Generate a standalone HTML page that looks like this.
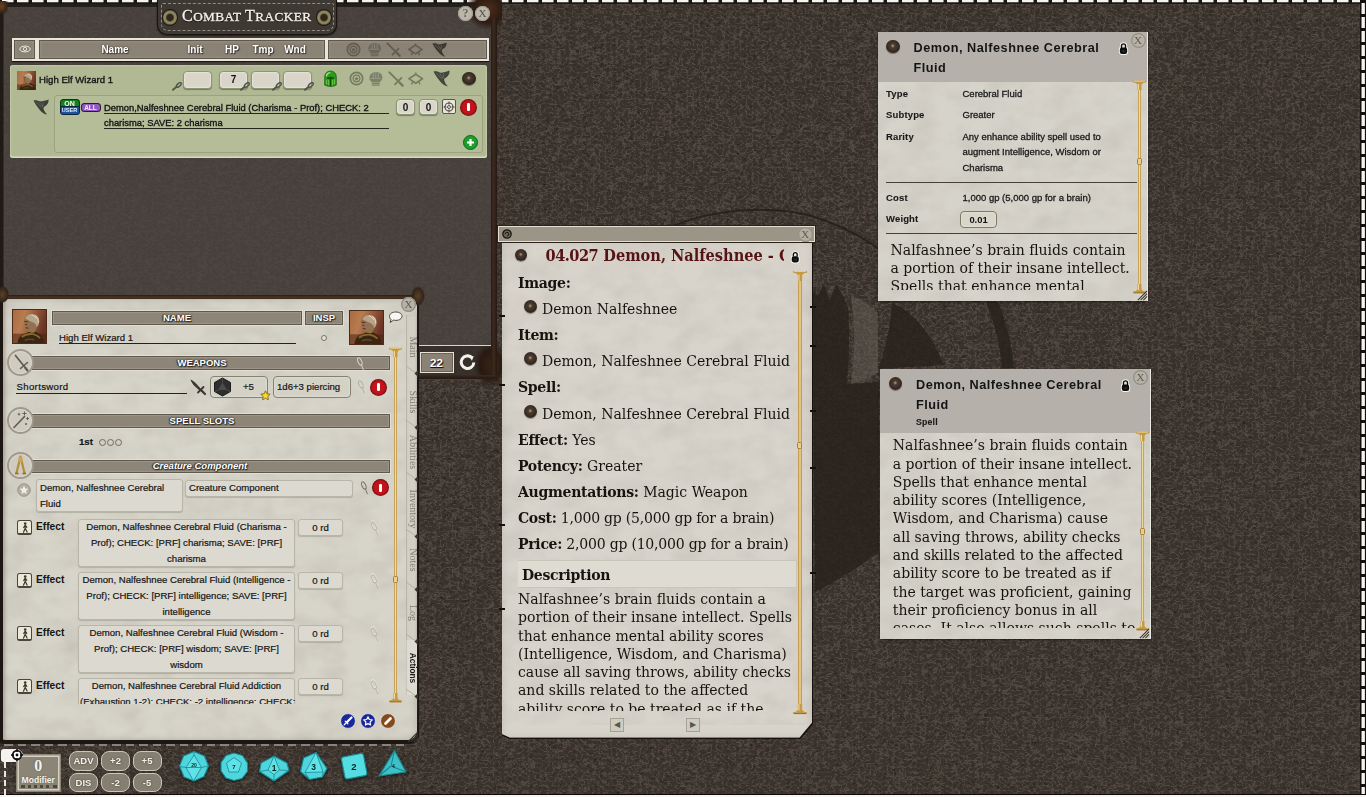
<!DOCTYPE html>
<html lang="en">
<head>
<meta charset="utf-8">
<title>Fantasy Grounds - Combat Tracker</title>
<style>
*{box-sizing:border-box;margin:0;padding:0}
html,body{width:1366px;height:797px;overflow:hidden;background:#3f3732}
body{position:relative;font-family:"Liberation Sans","DejaVu Sans",sans-serif;font-size:9.5px;color:#111;}
.abs,.abs *{position:absolute}
.a{position:absolute}
.abs b,.abs span,.abs i{position:static}
.serif{font-family:"DejaVu Serif Condensed","DejaVu Serif","Liberation Serif",serif}
.lserif{font-family:"Liberation Serif","DejaVu Serif",serif}
.nw{white-space:nowrap}
svg{position:absolute;overflow:visible}
/* ---------- desktop ---------- */
#desk{left:0;top:0;width:1366px;height:797px;background:#3f3732}
/* ---------- combat tracker ---------- */
#ct{left:0;top:2px;width:498px;height:378px;background:#4b4643;border-left:3px solid #221a15;border-top:3px solid #2a211b;}
.hdrcell{background:#8a8275;border:1px solid #5f574c;box-shadow:inset 0 0 3px #a39c8e}
.hl{color:#fff;font-weight:bold;font-size:10px;text-shadow:0 0 2px #3a342c,1px 1px 1px #3a342c;transform:translateX(-50%);white-space:nowrap}
.nbox{background:#d9d6c9;border:1px solid #8f9475;border-radius:4px;box-shadow:inset 0 0 2px #fff, 0 1px 1px rgba(60,60,40,.5);text-align:center;font-weight:bold;font-size:10px;line-height:16px}

/* ---------- character sheet ---------- */
.bar{background:#8c8578;border:1px solid #5f584c;box-shadow:0 0 0 1px #e2ded3,inset 0 0 0 1px #9a9386}
.bl{color:#fff;font-weight:bold;font-size:9.5px;line-height:12px;text-shadow:0 0 2px #2c2822,1px 1px 1px #2c2822,-1px 0 1px #2c2822;transform:translateX(-50%);white-space:nowrap}
.tx{font-size:9.6px;line-height:12px;color:#151515;-webkit-text-stroke:.2px #151515}
.circ{width:27px;height:27px;margin:-1px 0 0 -1px;border-radius:50%;background:#cfcbc0;border:2px solid #9e998b;box-shadow:inset 0 0 2px #f0ede4}
.fbox{background:#d4d1c6;border:1.500px solid #858171;border-radius:4px;box-shadow:inset 0 0 2px #f4f2ea}
.ebox{background:#dcd9d0;border:1px solid #b9b5a9;border-radius:3px;box-shadow:0 1px 1px rgba(120,115,100,.35)}
.rd{width:45px;height:17px;text-align:center;font-size:9.6px;line-height:15px;color:#151515;-webkit-text-stroke:.2px #151515}
.redb{width:15px;height:15px;border-radius:50%;background:#c2151b;box-shadow:0 0 0 1px #7a0e12,inset 0 0 2px #8d1014;font-size:0}
.redb::after{content:"";position:absolute;left:6px;top:3.5px;width:3px;height:8px;border-radius:1.2px;background:#fff}
.slot{width:7px;height:7px;border-radius:50%;border:1px solid #6d6a62}
.eico{width:15px;height:15.500px;background:#ece8d8;border:1px solid #4a463c;border-right-width:1.500px;border-bottom-width:2px;border-radius:2.500px}
.ef{font-weight:bold;font-size:10.200px;line-height:12px;color:#151515}
.et{width:213px;text-align:center;font-size:9.6px;line-height:15.8px;color:#151515;-webkit-text-stroke:.2px #151515;white-space:nowrap}
.rb{width:15px;height:15px;border-radius:50%;box-shadow:0 0 0 1px rgba(0,0,0,.4)}
.tab{left:412.500px;font-family:"Liberation Serif",serif;font-size:10px;line-height:12px;color:#7f7a6e;white-space:nowrap;transform:translate(-50%,-50%) rotate(90deg)}
.xb{width:15px;height:15px;border-radius:50%;background:#b6b2a7;color:#5f5a51;font-size:11px;line-height:15px;text-align:center;box-shadow:inset 0 0 0 1.300px #948f82}

/* ---------- record windows ---------- */
.knob{width:12px;height:12px;border-radius:50%;background:radial-gradient(circle at 48% 45%,#9c8670 0 6%,#4c3c30 20%,#372b22 55%,#1c1511 88%);box-shadow:0 1px 1px rgba(0,0,0,.35)}
.sl{left:0;white-space:nowrap;line-height:24px}
.sl b{letter-spacing:-.3px}
#sbody .knob{width:13px;height:13px}
.sbar{width:3px;background:linear-gradient(90deg,#b58a3a,#f0d79a 50%,#b58a3a)}
.scap{width:11px;height:4px;background:#c79c46;border-radius:2px}
.scapt,.scapb{width:13px;height:10px}
.sthumb{width:5px;height:7px;border:1px solid #a87f33;background:#e9cf8f;border-radius:1.5px}
.nav{width:14px;height:14px;background:#cfccc1;border:1px solid #a5a194;color:#5a564d;font-size:8px;line-height:12px;text-align:center;font-family:"DejaVu Sans",sans-serif}
.wt{font-weight:bold;font-size:12.700px;letter-spacing:.5px;line-height:20px;color:#141414;white-space:nowrap}
.il{font-size:9.500px;line-height:12px;color:#1a1a1a;white-space:nowrap;-webkit-text-stroke:.3px #1a1a1a}
.il.b{-webkit-text-stroke:.1px #1a1a1a;letter-spacing:.15px}
.b{font-weight:bold}
/* ---------- bottom bar ---------- */
.mb{width:29px;height:19.500px;border-radius:8px;background:#857e71;border:1.500px solid #cdc7b9;color:#f3f1ea;font-weight:bold;font-size:9.5px;line-height:17px;text-align:center;text-shadow:0 0 2px #3a342c}
</style>
</head>
<body>
<svg width="0" height="0" style="left:0;top:0">
  <defs>
    <symbol id="i-target" viewBox="0 0 16 16"><circle cx="8" cy="8" r="6.6" fill="none" stroke="currentColor" stroke-width="1.8"/><circle cx="8" cy="8" r="3.6" fill="none" stroke="currentColor" stroke-width="1.3"/><path d="M8 5.6l.8 1.600 1.700.2-1.300 1.200.4 1.700L8 9.500l-1.600.8.400-1.700-1.300-1.200 1.700-.2z" fill="currentColor"/></symbol>
    <symbol id="i-fist" viewBox="0 0 16 16"><path d="M1.500 7.400C1.500 3.400 4 1.200 8 1.200c4.400 0 6.800 1.800 6.800 5.400 0 1.800-.8 3.200-2.200 4.200l-.4 1H3.800l-.4-1.200C2.100 9.800 1.500 8.800 1.500 7.400z" fill="currentColor"/><path d="M3.800 12.300h8.400v1.200H3.800zM4 14h8v1.200H4z" fill="currentColor"/><path d="M5.400 2.400v4.800M8 1.800v5.200M10.800 2.200v5M2.600 7.800h10.400" stroke="#fff" stroke-opacity=".28" stroke-width=".8" fill="none"/></symbol>
    <symbol id="i-sword" viewBox="0 0 16 16"><path d="M1.400 1.400L12.400 12.400" stroke="currentColor" stroke-width="2" stroke-linecap="round"/><path d="M7 13.400L13.400 7" stroke="currentColor" stroke-width="1.800" stroke-linecap="round"/><path d="M12.200 12.200L14.600 14.600" stroke="currentColor" stroke-width="2.400" stroke-linecap="round"/></symbol>
    <symbol id="i-dia" viewBox="0 0 16 16"><path d="M1 8L8 3.400L15 8L8 12.600Z" fill="none" stroke="currentColor" stroke-width="1.700"/><path d="M5 10.800L3.600 14M11 10.800L12.400 14M8 3.400V1.600" stroke="currentColor" stroke-width="1.400" fill="none"/></symbol>
    <symbol id="i-wing" viewBox="0 0 16 16"><path d="M.5 1.500C3 .8 5 1.500 7 2.600c3-.400 6-1.200 8.600-2.200.2 3-1.200 5.400-3.600 6.800-.8.500-1.400 1-1.600 1.800.4 2.400 1.800 4.600 3.800 6.600-3.400-.6-6-2.600-8-5.400C4 7.400 2 4.600.5 1.500z" fill="currentColor"/><path d="M3 3c2 1.400 3.600 3.200 5 5.400M6.400 3.400c1.400 1.400 2.400 3 3.200 4.800M10 3.200c.2 1.400 0 2.800-.4 4" stroke="#fff" stroke-opacity=".25" stroke-width=".7" fill="none"/></symbol>
    <symbol id="i-helm" viewBox="0 0 14 18"><path d="M.8 7.400C.8 3.200 3.200.8 7 .8s6.200 2.400 6.200 6.600v8.400c-1.800 1-3.800 1.400-6.200 1.400s-4.400-.4-6.200-1.400z" fill="#2c9a1b" stroke="#1a5e10" stroke-width=".9"/><path d="M7 6.800V17M3.400 8.200h7.200" stroke="#14490c" stroke-width="1.500" fill="none"/><path d="M2.600 6.400C2.800 4 4.400 2.600 6.800 2.400" stroke="#9cf07a" stroke-width="1.400" fill="none"/><path d="M2.600 10.200v4.600M11.400 9.600v5.200M5 10.400v5.600M9.200 10.400v5.600" stroke="#6ed24c" stroke-width=".9"/></symbol>
    <symbol id="i-pin" viewBox="0 0 12 10"><path d="M1.200 8.800L5 5.400" stroke="currentColor" stroke-width="2.200" stroke-linecap="round"/><ellipse cx="7.800" cy="3.200" rx="3.400" ry="1.600" transform="rotate(-42 7.800 3.200)" fill="none" stroke="currentColor" stroke-width="1.700"/></symbol>
    <symbol id="i-link" viewBox="0 0 10 16"><ellipse cx="4.200" cy="5.200" rx="2.100" ry="4.600" transform="rotate(-24 4.200 5.200)" fill="none" stroke="currentColor" stroke-width="1.100"/><path d="M5.800 8.600L8.200 14.600" stroke="currentColor" stroke-width="1.100" stroke-linecap="round"/></symbol>
    <symbol id="i-scapt" viewBox="0 0 13 10"><path d="M0 .8h13v1.600c-2.500.3-4 1-4.500 2.600v5h-4V5C4 3.400 2.500 2.700 0 2.400z" fill="#c69a43"/><path d="M1 1.200h11" stroke="#f3dc9d" stroke-width=".8"/><path d="M5.500 4v6" stroke="#f0d79a" stroke-width="1"/></symbol><symbol id="i-scapb" viewBox="0 0 13 10"><path d="M0 9.200h13V7.600c-2.500-.3-4-1-4.500-2.600V0h-4v5C4 6.600 2.500 7.300 0 7.600z" fill="#c69a43"/><path d="M1 8.800h11" stroke="#8a6522" stroke-width=".8"/><path d="M5.500 0v6" stroke="#f0d79a" stroke-width="1"/></symbol><symbol id="i-lock" viewBox="0 0 12 16"><g stroke="#f4f3ee" stroke-width="2.200" stroke-linejoin="round"><path d="M3.800 7.500V5.300a2.200 2.200 0 0 1 4.400 0v2.200" fill="none" stroke-width="3.600"/><rect x="2" y="7.200" width="8" height="7" rx="2.400" fill="#f4f3ee"/></g><path d="M3.800 7.500V5.300a2.200 2.200 0 0 1 4.400 0v2.200" fill="#e6e4dd" stroke="#0b0b0b" stroke-width="1.500"/><rect x="2" y="7.200" width="8" height="7" rx="2.400" fill="#0b0b0b"/><path d="M4.500 9.500v3M6 9.500v3M7.500 9.500v3" stroke="#444" stroke-width=".6"/></symbol><linearGradient id="pg" x1="0" y1="0" x2="1" y2=".3"><stop offset="0" stop-color="#a96a40"/><stop offset=".35" stop-color="#b87c50"/><stop offset=".7" stop-color="#935437"/><stop offset="1" stop-color="#693424"/></linearGradient>
    <symbol id="i-port" viewBox="0 0 34 34"><rect width="34" height="34" fill="url(#pg)"/><rect y="24" width="34" height="10" fill="#4a2218" opacity=".55"/><path d="M4.500 34c.5-4.500 2.500-8 6-9.500l5-2 5-1.500c3 .5 5.500 2 8 4.500 2 2.500 3.500 5 4 8.500z" fill="#3a2412"/><path d="M9 27.500c3-2.500 7-3.500 11.500-3 3 .5 5.500 2 7.500 4" stroke="#94722f" stroke-width="2" fill="none" opacity=".85"/><path d="M12 31c3-1.500 7-1.500 10-.500" stroke="#5d5a2a" stroke-width="1.500" fill="none" opacity=".8"/><path d="M11.500 10.500c.5-3.500 3.500-6 7.500-6 4.500 0 7.500 3 7.500 7.500 0 3-1.500 5-2.500 7l-1.500 3.500c-2.500 1-5 .5-6.500-1l-2.500-.500c-1-1-1-2.500-.5-3.500l-1.500-2.500 1-1.500c-.5-1-.5-2-.500-3z" fill="#93704f"/><path d="M12.500 8.500c1.500-3 4-4.500 7-4.500 4.500 0 7.500 3 7.500 7.500 0 2.500-1 4.500-2.500 6-.5-2-1.500-3.500-3-4.500-2.500-1.500-5.500-2.500-9-4.500z" fill="#b5a38a"/><path d="M22.500 5.500c2.500 1.500 4 4 3.500 7.500M19 5c2 .5 4 2 5 4" stroke="#efe6d6" stroke-width="1" fill="none" opacity=".8"/><path d="M11.500 11.500l4 .5M12.500 14.500l2 .5M13 18l3 .5" stroke="#4d3222" stroke-width="1" fill="none"/></symbol>
  </defs>
</svg>
<div id="desk" class="a"></div>
<svg width="1366" height="797" style="left:0;top:0">
  <defs>
    <filter id="leather" color-interpolation-filters="sRGB" x="0" y="0" width="100%" height="100%">
      <feTurbulence type="fractalNoise" baseFrequency="0.17 0.22" numOctaves="2" seed="7" result="n"/>
      <feColorMatrix in="n" type="matrix" values="0 0 0 0 0.36  0 0 0 0 0.322  0 0 0 0 0.29  1 0 0 0 0"/>
      <feComponentTransfer><feFuncA type="table" tableValues="0 0 0 0 0 0 0 0 0 .3 .85 .3 0 0 0 0 0 0 0 0 0"/></feComponentTransfer>
      <feGaussianBlur stdDeviation="0.55"/>
    </filter>
    <filter id="leatherd" color-interpolation-filters="sRGB" x="0" y="0" width="100%" height="100%">
      <feTurbulence type="fractalNoise" baseFrequency="0.3 0.36" numOctaves="2" seed="3" result="n"/>
      <feColorMatrix in="n" type="matrix" values="0 0 0 0 0.10  0 0 0 0 0.08  0 0 0 0 0.07  0 -2.2 -1.6 0 1.75"/>
    </filter>
    <filter id="paper" color-interpolation-filters="sRGB" x="0" y="0" width="100%" height="100%">
      <feTurbulence type="fractalNoise" baseFrequency="0.035 0.05" numOctaves="3" seed="11" result="n"/>
      <feColorMatrix in="n" type="matrix" values="0 0 0 0 0.5  0 0 0 0 0.47  0 0 0 0 0.4  0.9 0.9 0 0 -0.72"/>
    </filter>
    <radialGradient id="vig" cx="50%" cy="50%" r="75%"><stop offset="60%" stop-color="#000" stop-opacity="0"/><stop offset="100%" stop-color="#000" stop-opacity=".25"/></radialGradient>
  </defs>
  <rect width="1366" height="797" fill="#3a322c"/>
  <rect width="1366" height="797" filter="url(#leather)"/>
  <rect width="1366" height="797" filter="url(#leatherd)" opacity=".55"/>
  <!-- dragon emblem -->
  <g id="emblem" fill="#28211d" stroke="none" opacity=".82">
    <path d="M660 232C690 216 735 207 780 210.500C815 213 850 228 885 253" fill="none" stroke="#241d19" stroke-width="1.800"/>
    <path d="M812 290l6 6 5-12 7 16 6-16 6 10 6 14c2 24 1 50-1 76l32-2v170c-20 16-42 28-64 40z"/>
    <path d="M851 296c10 2 20 8 27 18v58c-8 6-18 10-27 12 4-30 4-60 0-88z" fill="#6a625a" opacity=".55"/>
    <path d="M892 303c20 8 38 28 52 62l-66 4c8-20 12-42 14-66z"/>
    <path d="M986 302c8 20 14 42 16 66l12 0c-2-24-8-46-16-66z"/>
  </g>
  <!-- combat tracker body -->
  <rect x="0" y="3" width="497" height="377" fill="#4b4541" opacity=".78"/>
  <rect x="0" y="2" width="497" height="5" fill="#1a1411" opacity=".75"/>
  <rect x="0" y="2" width="3.5" height="378" fill="#1a1411" opacity=".85"/>
  <!-- stitching: top, right, bottom -->
  <rect x="0" y="0" width="1366" height="4" fill="#1d1714"/>
  <line x1="2" y1="1" x2="1366" y2="1" stroke="#f4f3ee" stroke-width="2.4" stroke-dasharray="11.5 3.5"/>
  <rect x="1360" y="0" width="6" height="797" fill="#15110f"/>
  <line x1="1363.2" y1="3" x2="1363.2" y2="797" stroke="#f4f3ee" stroke-width="3.4" stroke-dasharray="11 3"/>
  <rect x="0" y="794" width="1366" height="1" fill="#0e0b0a"/>
  <rect x="0" y="795" width="1366" height="2" fill="#f7f6f2"/>
</svg>

<!-- ================= COMBAT TRACKER ================= -->
<div id="ctc" class="abs" style="left:0;top:0;width:500px;height:385px">
  <!-- title plate -->
  <div style="left:157px;top:0;width:180px;height:34.500px;background:#3f3934;border:1.500px solid #1a1411;border-top:none;border-radius:0 0 10px 10px;box-shadow:0 1px 2px rgba(0,0,0,.6)"></div>
  <div style="left:160.500px;top:3px;width:173px;height:28px;border:1px dashed #a29b90;border-radius:2px 2px 7px 7px;opacity:.85"></div>
  <div class="lserif nw" style="left:182px;top:7px;color:#f3f0e8;font-size:13.200px;letter-spacing:.45px;line-height:18px;text-shadow:0 1px 1px #000;-webkit-text-stroke:.35px #f3f0e8"><span style="font-size:16px">C</span>OMBAT <span style="font-size:16px">T</span>RACKER</div>
  <div style="left:162.500px;top:10px;width:14.500px;height:14.500px;border-radius:50%;background:radial-gradient(circle,#2e281c 0 30%,#544b30 36%,#8d8361 44% 62%,#4d452f 70% 100%);box-shadow:0 0 0 1px #1f1a14"></div>
  <div style="left:316.500px;top:10px;width:14.500px;height:14.500px;border-radius:50%;background:radial-gradient(circle,#2e281c 0 30%,#544b30 36%,#8d8361 44% 62%,#4d452f 70% 100%);box-shadow:0 0 0 1px #1f1a14"></div>
  <div style="left:466px;top:0;width:36px;height:30px;background:radial-gradient(ellipse at 62% 30%,#4a2e1c 0,#2c1b12 45%,rgba(40,25,16,0) 72%)"></div>
  <div style="left:0;top:1px;width:8px;height:13px;background:radial-gradient(ellipse at 20% 40%,#6a4524 0,#3a2415 55%,rgba(40,25,16,0) 85%)"></div>
  <div style="left:474px;top:343px;width:28px;height:44px;background:radial-gradient(ellipse at 60% 50%,#4a2e1c 0,#2c1b12 45%,rgba(40,25,16,0) 72%)"></div>
  <!-- help / close -->
  <div class="lserif" style="left:458px;top:6px;width:15px;height:15px;border-radius:50%;background:#bab6aa;color:#6b665c;font-size:12px;font-weight:bold;line-height:15px;text-align:center;box-shadow:inset 0 0 0 1px #a39e91">?</div>
  <div class="lserif" style="left:475px;top:6px;width:15px;height:15px;border-radius:50%;background:#bab6aa;color:#55504a;font-size:11px;line-height:15px;text-align:center;box-shadow:inset 0 0 0 1px #a39e91">X</div>
  <!-- header bar -->
  <div style="left:12px;top:37.5px;width:477px;height:23.5px;background:#e9e5db;box-shadow:0 1px 1px #1d1713"></div>
  <div class="hdrcell" style="left:14px;top:39.5px;width:21px;height:19.5px"></div>
  <div class="hdrcell" style="left:39px;top:39.5px;width:286px;height:19.5px"></div>
  <div class="hdrcell" style="left:328px;top:39.5px;width:159px;height:19.5px"></div>
  <div class="hl" style="left:115px;top:44px">Name</div>
  <div class="hl" style="left:195px;top:44px">Init</div>
  <div class="hl" style="left:232px;top:44px">HP</div>
  <div class="hl" style="left:263px;top:44px">Tmp</div>
  <div class="hl" style="left:295px;top:44px">Wnd</div>
  <!-- entry -->
  <div style="left:10px;top:64.500px;width:477px;height:93.500px;background:#b1b994;border-radius:3px;box-shadow:inset 0 0 2px #dde3c6,inset 0 -1.500px 1px #d5dbbd"></div>
  <div style="left:54px;top:95px;width:429px;height:57.500px;border:1px solid #9aa280;border-radius:3px;background:#b4bc98"></div>
  <div class="nw" style="left:39px;top:74px;font-size:9.600px;color:#161616;-webkit-text-stroke:.35px #161616">High Elf Wizard 1</div>
  <div class="nbox" style="left:183px;top:71px;width:29px;height:18px"></div>
  <div class="nbox" style="left:219px;top:71px;width:29px;height:18px">7</div>
  <div class="nbox" style="left:251px;top:71px;width:29px;height:18px"></div>
  <div class="nbox" style="left:283px;top:71px;width:29px;height:18px"></div>
  <!-- header icons -->
  <svg style="left:346px;top:42px;color:#625c51" width="15" height="15"><use href="#i-target"/></svg>
  <svg style="left:367px;top:41.500px;color:#6b655a" width="15" height="15"><use href="#i-fist"/></svg>
  <svg style="left:386px;top:42px;color:#625c51" width="15" height="15"><use href="#i-sword"/></svg>
  <svg style="left:407.500px;top:42px;color:#625c51" width="15" height="15"><use href="#i-dia"/></svg>
  <svg style="left:432px;top:41.500px;color:#3d382f" width="15" height="15"><use href="#i-wing"/></svg>
  <svg style="left:19px;top:45px;color:#e8e5dc" width="12" height="8" viewBox="0 0 12 8"><ellipse cx="6" cy="4" rx="5.200" ry="2.900" fill="none" stroke="currentColor" stroke-width="1"/><circle cx="6" cy="4" r="1.700" fill="none" stroke="currentColor" stroke-width=".9"/></svg>
  <!-- entry icons -->
  <svg style="left:323.500px;top:69.500px" width="13" height="17.500"><use href="#i-helm"/></svg>
  <svg style="left:348.500px;top:70.500px;color:#757b61" width="15" height="15"><use href="#i-target"/></svg>
  <svg style="left:368px;top:70.500px;color:#7b8166" width="15.500" height="15.500"><use href="#i-fist"/></svg>
  <svg style="left:388px;top:70.500px;color:#757b61" width="16" height="16"><use href="#i-sword"/></svg>
  <svg style="left:407.500px;top:71px;color:#757b61" width="15.500" height="15.500"><use href="#i-dia"/></svg>
  <svg style="left:432.500px;top:70px;color:#43463b" width="17" height="17"><use href="#i-wing"/></svg>
  <div class="knob" style="left:462px;top:71.500px;width:13.500px;height:13.500px"></div>
  <svg style="left:32.500px;top:98.500px;color:#3d4036" width="16" height="16"><use href="#i-wing"/></svg>
  <svg style="left:172px;top:81.500px;color:#51554a" width="10.500" height="9"><use href="#i-pin"/></svg>
  <svg style="left:239.500px;top:81.500px;color:#51554a" width="10.500" height="9"><use href="#i-pin"/></svg>
  <svg style="left:271.500px;top:81.500px;color:#51554a" width="10.500" height="9"><use href="#i-pin"/></svg>
  <svg style="left:303.500px;top:81.500px;color:#51554a" width="10.500" height="9"><use href="#i-pin"/></svg>
  <svg style="left:16px;top:71px" width="21" height="19"><use href="#i-port"/></svg>
  <svg style="left:443px;top:100.500px;color:#4b4b43;z-index:3" width="12" height="12" viewBox="0 0 12 12"><circle cx="6" cy="6" r="4" fill="none" stroke="currentColor" stroke-width="1.100"/><circle cx="6" cy="6" r="1.500" fill="none" stroke="currentColor" stroke-width=".9"/><path d="M6 .5v3M6 8.500v3M.5 6h3M8.500 6h3" stroke="currentColor" stroke-width="1"/></svg>
  <!-- effect row -->
  <div style="left:60.500px;top:99.500px;width:18px;height:7.500px;line-height:7.500px;background:#16801f;border-radius:2.500px 2.500px 0 0;color:#f2fff2;font-size:7px;font-weight:bold;text-align:center;box-shadow:0 0 0 1px #0b3a10">ON</div>
  <div style="left:60.500px;top:107px;width:18px;height:7px;line-height:7px;background:#1b549c;border-radius:0 0 2.500px 2.500px;color:#e4f0ff;font-size:5.600px;font-weight:bold;text-align:center;box-shadow:0 0 0 1px #0c2442">USER</div>
  <div style="left:81.500px;top:103.500px;width:18px;height:7px;line-height:7px;background:#9159c2;border-radius:2.500px;color:#f6ebff;font-size:6.500px;font-weight:bold;text-align:center;box-shadow:0 0 0 1px #2b1a3c">ALL</div>
  <div class="nw" style="left:104px;top:101.500px;font-size:9.400px;line-height:12px;color:#141414;-webkit-text-stroke:.35px #141414">Demon,Nalfeshnee Cerebral Fluid (Charisma - Prof); CHECK: 2</div>
  <div style="left:104px;top:112.600px;width:285px;height:1px;background:#23261a"></div>
  <div class="nw" style="left:104px;top:116.700px;font-size:9.400px;line-height:12px;color:#141414;-webkit-text-stroke:.35px #141414">charisma; SAVE: 2 charisma</div>
  <div style="left:104px;top:127.700px;width:285px;height:1px;background:#23261a"></div>
  <div class="nbox" style="left:396px;top:99px;width:19px;height:16px;line-height:15px">0</div>
  <div class="nbox" style="left:419px;top:99px;width:19px;height:16px;line-height:15px">0</div>
  <div style="left:442px;top:99px;width:14px;height:15px;background:#e9e6d9;border:1px solid #555;border-radius:2px"></div>
  <div class="redb" style="left:461px;top:99.5px"></div>
  <svg style="left:462.500px;top:134.500px" width="15" height="15" viewBox="0 0 15 15"><circle cx="7.500" cy="7.500" r="7" fill="#1f9d2b" stroke="#0f6418" stroke-width="1"/><path d="M7.500 4v7M4 7.500h7" stroke="#fff" stroke-width="2.200"/></svg>
  <!-- bottom bar of CT -->
  <div style="left:419px;top:346px;width:72px;height:29px;background:rgba(34,24,17,.42)"></div>
  <div style="left:419px;top:345px;width:73px;height:1px;background:#d9d5ca"></div>
  <div style="left:419.500px;top:352px;width:34px;height:20.500px;background:#8a8275;border:1.500px solid #e6e2d8;box-shadow:inset 0 0 0 1px #6b6357"></div>
  <div class="nw" style="left:419px;top:356.500px;width:35px;text-align:center;color:#fff;font-weight:bold;font-size:11.500px;line-height:13px;text-shadow:0 1px 0 #15110d,1px 1px 1px #15110d">22</div>
  <svg style="left:459px;top:354px" width="17" height="17" viewBox="0 0 17 17"><path d="M12.600 3.400A6.300 6.300 0 1 0 14.800 8.500" fill="none" stroke="#f4f2ec" stroke-width="3"/><path d="M9.500 1.200l5.200 1-1.800 4.600z" fill="#f4f2ec"/></svg>
  <!-- frame -->
  <div style="left:491px;top:18px;width:5.500px;height:362px;background:linear-gradient(90deg,#2a1d15,#3b2a20 45%,#26190f)"></div>
  <div style="left:419px;top:374.500px;width:78px;height:4.500px;background:linear-gradient(#3b2a20,#231810)"></div>
</div>

<!-- ================= CHARACTER SHEET ================= -->
<div id="cs" class="abs" style="left:0;top:293px;width:430px;height:456px">
  <!-- frame + paper -->
  <div style="left:0;top:4px;width:419px;height:447px;background:#1d1612;border-radius:2px 2px 9px 3px"></div>
  <div style="left:0;top:1.5px;width:421px;height:5px;background:linear-gradient(#2a1d14,#4a3424 45%,#2c1e15);border-radius:2px"></div>
  <div style="left:2.500px;top:6px;width:414.500px;height:441px;background:#d7d4ca;border-radius:1px 1px 9px 2px;box-shadow:inset 0 0 7px #b9b5a8,inset 3px 0 3px -1px #a9a596"></div>
  <svg style="left:2.500px;top:6px;opacity:.2" width="414.500" height="441"><rect width="414.500" height="441" filter="url(#paper)"/></svg>
  <div style="left:-2px;top:-7px;width:11px;height:17px;background:radial-gradient(ellipse at 40% 50%,#5a4127,#33241a 60%,transparent 72%)"></div>
  <div style="left:411px;top:-7px;width:14px;height:20px;background:radial-gradient(ellipse at 50% 50%,#5a4127,#33241a 55%,transparent 72%)"></div>
  <svg style="left:406px;top:437px" width="13" height="13" viewBox="0 0 13 13"><path d="M2 12L12 2M5 12L12 5M8 12L12 8" stroke="#3a332c" stroke-width="1.100"/></svg>
  <div style="left:4px;top:450.500px;width:404px;height:2px;background:repeating-linear-gradient(90deg,#8f8b86 0 8.500px,transparent 8.500px 13.500px);opacity:.9"></div>
  <!-- tab strip -->
  <div style="left:406px;top:22px;width:11px;height:380px;background:#d2cfc5;border-left:1px solid #b9b5a9;box-shadow:inset -1px 0 2px #b9b5a9"></div>
  <div style="left:406px;top:347px;width:11px;height:55px;background:#dddad1;border-left:1px solid #c9c5ba"></div>
  <!-- portraits -->
  <svg style="left:12.500px;top:16.500px;outline:1px solid #4d2a18" width="33" height="33.500" viewBox="0 0 34 34" preserveAspectRatio="none"><use href="#i-port"/></svg>
  <svg style="left:349.500px;top:17.500px;outline:1px solid #4d2a18" width="33.500" height="33" viewBox="0 0 34 34" preserveAspectRatio="none"><use href="#i-port"/></svg>
  <!-- name / insp bars -->
  <div class="bar" style="left:52px;top:18px;width:250px;height:14px"></div>
  <div class="bar" style="left:305px;top:18px;width:38px;height:14px"></div>
  <div class="bl" style="left:177px;top:19px">NAME</div>
  <div class="bl" style="left:324px;top:19px">INSP</div>
  <div class="tx nw" style="left:59px;top:38.700px">High Elf Wizard 1</div>
  <div style="left:59px;top:49.500px;width:237px;height:1px;background:#222"></div>
  <div style="left:321px;top:42px;width:6px;height:6px;border-radius:50%;border:1px solid #77736a;background:#e4e1d8"></div>
  <!-- weapons -->
  <div class="bar" style="left:30px;top:63px;width:360px;height:14px"></div>
  <div class="circ" style="left:7.5px;top:56.5px"></div>
  <svg style="left:7.5px;top:56.5px;color:#5e5a50" width="25" height="25" viewBox="0 0 25 25"><path d="M7.500 5.500L17.500 18" stroke="currentColor" stroke-width="1.700" stroke-linecap="round"/><path d="M12.500 18.500L19.500 12.500" stroke="currentColor" stroke-width="1.500" stroke-linecap="round"/><path d="M17.500 18l2 2.500" stroke="currentColor" stroke-width="2.200" stroke-linecap="round"/></svg>
  <div class="bl" style="left:202px;top:64px">WEAPONS</div>
  <div class="tx nw" style="left:16.500px;top:87.700px;letter-spacing:.35px">Shortsword</div>
  <div style="left:16px;top:99.500px;width:171px;height:1px;background:#222"></div>
  <div class="fbox" style="left:210px;top:83px;width:58px;height:22px"></div>
  <div class="fbox" style="left:273px;top:83px;width:78px;height:22px"></div>
  <div class="tx nw" style="left:243px;top:88px">+5</div>
  <div class="tx nw" style="left:277px;top:88px">1d6+3 piercing</div>
  <div class="redb" style="left:370.500px;top:86.500px"></div>
  <svg style="left:189px;top:85px;color:#3b3732" width="18" height="17" viewBox="0 0 18 17"><path d="M1.500 1.500C3 2 5 3.500 7.500 6l5 5.500-1.500 1.500-5.500-5C3.200 5.600 2 3.500 1.500 1.500z" fill="currentColor"/><path d="M9 14.500l5.500-5.500" stroke="currentColor" stroke-width="1.800" stroke-linecap="round"/><path d="M12.500 12.500l3.500 3.500" stroke="currentColor" stroke-width="2.200" stroke-linecap="round"/></svg>
  <svg style="left:213px;top:84px" width="19" height="20" viewBox="0 0 19 20"><path d="M9.500 1l8 4.500v9l-8 4.500-8-4.500v-9z" fill="#2f2f2f" stroke="#1c1c1c" stroke-width="1"/><path d="M9.500 5.500l4.500 7.500h-9z" fill="#4c4c4c"/><path d="M9.500 1v4.500M14 13l3.500 1.500M5 13l-3.500 1.500" stroke="#555" stroke-width=".8"/></svg>
  <svg style="left:259.500px;top:96.500px" width="11" height="11" viewBox="0 0 11 11"><path d="M5.500.8l1.400 3 3.300.4-2.400 2.300.6 3.300-2.900-1.600-2.900 1.600.6-3.300L.8 4.200l3.300-.4z" fill="#f5d829" stroke="#6e5a12" stroke-width=".8" stroke-linejoin="round"/></svg>
  <svg style="left:356.500px;top:87px;color:#b4b0a3" width="9" height="14"><use href="#i-link"/></svg>
  <svg style="left:355.500px;top:64px;color:#d9d5c9" width="9" height="14"><use href="#i-link"/></svg>
  <svg style="left:356px;top:167px;color:#d9d5c9" width="9" height="14"><use href="#i-link"/></svg>
  <svg style="left:359.500px;top:187.500px;color:#77736a" width="9" height="14"><use href="#i-link"/></svg>
  <!-- spell slots -->
  <div class="bar" style="left:30px;top:121px;width:360px;height:14px"></div>
  <div class="circ" style="left:7.5px;top:114.5px"></div>
  <svg style="left:7.5px;top:114.5px;color:#5e5a50" width="25" height="25" viewBox="0 0 25 25"><path d="M6 19.500L16.500 8.500" stroke="currentColor" stroke-width="1.600" stroke-linecap="round"/><path d="M16.500 3.500v4M14.500 5.500h4M19.500 9v3M18 10.500h3M11 5v2.500M9.800 6.200h2.400M18 15v2M17 16h2" stroke="currentColor" stroke-width=".9"/></svg>
  <div class="bl" style="left:202px;top:122px">SPELL SLOTS</div>
  <div class="tx nw" style="left:79px;top:143px;font-weight:bold">1st</div>
  <div class="slot" style="left:99px;top:146px"></div>
  <div class="slot" style="left:107px;top:146px"></div>
  <div class="slot" style="left:115px;top:146px"></div>
  <!-- creature component -->
  <div class="bar" style="left:30px;top:167px;width:360px;height:13px"></div>
  <div class="circ" style="left:7.5px;top:160px"></div>
  <svg style="left:7.5px;top:160px;color:#b48d38" width="25" height="25" viewBox="0 0 25 25"><path d="M12.500 3.500L8.500 20M12.500 3.500L16.500 20" stroke="currentColor" stroke-width="2.200" stroke-linecap="round"/><path d="M10.500 4h4v5h-4z" fill="#caa453"/><path d="M7 20.500h3.500M14.500 20.500H18" stroke="#8a6a25" stroke-width="1.400"/></svg>
  <div class="bl" style="left:200px;top:167px;font-style:italic">Creature Component</div>
  <div class="ebox" style="left:36px;top:186px;width:147px;height:33px"></div>
  <div class="tx" style="left:40px;top:187px;width:140px;line-height:15.7px">Demon, Nalfeshnee Cerebral Fluid</div>
  <div class="ebox" style="left:185px;top:187px;width:168px;height:17px"></div>
  <div class="tx nw" style="left:189px;top:189px">Creature Component</div>
  <div class="redb" style="left:372.500px;top:187px"></div>
  <svg style="left:16.500px;top:190px" width="14" height="14" viewBox="0 0 14 14"><circle cx="7" cy="7" r="6.300" fill="#b3afa3" stroke="#9a9689" stroke-width="1"/><path d="M7 2.600l1.300 2.800 3 .4-2.200 2.100.5 3L7 9.500l-2.600 1.400.5-3-2.200-2.100 3-.4z" fill="#efece3"/></svg>
  <!-- effects -->
  <div id="effs" style="left:0;top:220px;width:400px;height:191px;overflow:hidden">
    <svg style="left:370px;top:7px;color:#f1eee6" width="9.500" height="15"><use href="#i-link"/></svg>
    <svg style="left:370.400px;top:7.6px;color:#aaa698;opacity:.7" width="9.500" height="15"><use href="#i-link"/></svg>
    <svg style="left:370px;top:60px;color:#f1eee6" width="9.500" height="15"><use href="#i-link"/></svg>
    <svg style="left:370.400px;top:60.6px;color:#aaa698;opacity:.7" width="9.500" height="15"><use href="#i-link"/></svg>
    <svg style="left:370px;top:113px;color:#f1eee6" width="9.500" height="15"><use href="#i-link"/></svg>
    <svg style="left:370.400px;top:113.6px;color:#aaa698;opacity:.7" width="9.500" height="15"><use href="#i-link"/></svg>
    <svg style="left:370px;top:166px;color:#f1eee6" width="9.500" height="15"><use href="#i-link"/></svg>
    <svg style="left:370.400px;top:166.6px;color:#aaa698;opacity:.7" width="9.500" height="15"><use href="#i-link"/></svg>
    <div class="eico" style="left:16.500px;top:6.500px"><svg style="left:3px;top:1.500px" width="8" height="11" viewBox="0 0 8 11"><circle cx="4.200" cy="1.500" r="1.300" fill="#3a3832"/><path d="M4.200 3l-1.500 2.500M4.200 3l1.600 2.300M4.200 3v3.200l-1.700 4M4.200 6.200l1.900 3.800" stroke="#3a3832" stroke-width="1.200" fill="none" stroke-linecap="round"/></svg></div><div class="ef nw" style="left:36px;top:8px">Effect</div>
    <div class="ebox" style="left:78px;top:6px;width:217px;height:48px"></div>
    <div class="et" style="left:80px;top:6px">Demon, Nalfeshnee Cerebral Fluid (Charisma -<br>Prof); CHECK: [PRF] charisma; SAVE: [PRF]<br>charisma</div>
    <div class="ebox rd" style="left:298px;top:6px">0 rd</div>

    <div class="eico" style="left:16.500px;top:59.5px"><svg style="left:3px;top:1.500px" width="8" height="11" viewBox="0 0 8 11"><circle cx="4.200" cy="1.500" r="1.300" fill="#3a3832"/><path d="M4.200 3l-1.500 2.500M4.200 3l1.600 2.300M4.200 3v3.200l-1.700 4M4.200 6.200l1.900 3.800" stroke="#3a3832" stroke-width="1.200" fill="none" stroke-linecap="round"/></svg></div><div class="ef nw" style="left:36px;top:61px">Effect</div>
    <div class="ebox" style="left:78px;top:59px;width:217px;height:48px"></div>
    <div class="et" style="left:80px;top:59px">Demon, Nalfeshnee Cerebral Fluid (Intelligence -<br>Prof); CHECK: [PRF] intelligence; SAVE: [PRF]<br>intelligence</div>
    <div class="ebox rd" style="left:298px;top:59px">0 rd</div>

    <div class="eico" style="left:16.500px;top:112.5px"><svg style="left:3px;top:1.500px" width="8" height="11" viewBox="0 0 8 11"><circle cx="4.200" cy="1.500" r="1.300" fill="#3a3832"/><path d="M4.200 3l-1.500 2.500M4.200 3l1.600 2.300M4.200 3v3.200l-1.700 4M4.200 6.200l1.900 3.800" stroke="#3a3832" stroke-width="1.200" fill="none" stroke-linecap="round"/></svg></div><div class="ef nw" style="left:36px;top:114px">Effect</div>
    <div class="ebox" style="left:78px;top:112px;width:217px;height:48px"></div>
    <div class="et" style="left:80px;top:112px">Demon, Nalfeshnee Cerebral Fluid (Wisdom -<br>Prof); CHECK: [PRF] wisdom; SAVE: [PRF]<br>wisdom</div>
    <div class="ebox rd" style="left:298px;top:112px">0 rd</div>

    <div class="eico" style="left:16.500px;top:165.5px"><svg style="left:3px;top:1.500px" width="8" height="11" viewBox="0 0 8 11"><circle cx="4.200" cy="1.500" r="1.300" fill="#3a3832"/><path d="M4.200 3l-1.500 2.500M4.200 3l1.600 2.300M4.200 3v3.200l-1.700 4M4.200 6.200l1.900 3.800" stroke="#3a3832" stroke-width="1.200" fill="none" stroke-linecap="round"/></svg></div><div class="ef nw" style="left:36px;top:167px">Effect</div>
    <div class="ebox" style="left:78px;top:165px;width:217px;height:48px"></div>
    <div class="et" style="left:80px;top:165px">Demon, Nalfeshnee Cerebral Fluid Addiction<br>(Exhaustion 1-2); CHECK: -2 intelligence; CHECK:<br>-2 wisdom</div>
    <div class="ebox rd" style="left:298px;top:165px">0 rd</div>
  </div>
  <!-- scrollbar -->
  <div class="sbar" style="left:394px;top:60px;height:346px"></div>
  <svg class="scapt" style="left:389px;top:54px"><use href="#i-scapt"/></svg>
  <svg class="scapb" style="left:389px;top:400px"><use href="#i-scapb"/></svg>
  <div class="sthumb" style="left:393px;top:283px"></div>
  <!-- bottom buttons -->
  <svg style="left:340px;top:419.500px" width="56" height="16" viewBox="0 0 56 16"><circle cx="8" cy="8" r="7.400" fill="#18279a" stroke="#e9e7df" stroke-width=".8"/><path d="M11.500 4.500L6.800 9.200" stroke="#fff" stroke-width="2.200" stroke-linecap="round"/><path d="M5.300 8.200l2.500 2.500M5.500 10.500L4.200 11.800" stroke="#fff" stroke-width="1.300" stroke-linecap="round"/><circle cx="28" cy="8" r="7.400" fill="#18279a" stroke="#e9e7df" stroke-width=".8"/><path d="M28 3.800l1.300 2.700 3 .4-2.200 2.100.5 3-2.600-1.400-2.600 1.400.5-3-2.200-2.100 3-.4z" fill="none" stroke="#fff" stroke-width="1.200" stroke-linejoin="round"/><circle cx="48" cy="8" r="7.400" fill="#85491c" stroke="#e9e7df" stroke-width=".8"/><path d="M50.500 5.500L45.500 10.500" stroke="#fff" stroke-width="2.600" stroke-linecap="round"/></svg>
  <svg style="left:406px;top:73px" width="12" height="12" viewBox="0 0 12 12"><path d="M0 0L11 8" stroke="#b3afa3" stroke-width="1"/><path d="M12 4l-3.500 3.500L12 11z" fill="#3a332d"/></svg>
  <svg style="left:406px;top:127px" width="12" height="12" viewBox="0 0 12 12"><path d="M0 0L11 8" stroke="#b3afa3" stroke-width="1"/><path d="M12 4l-3.500 3.500L12 11z" fill="#3a332d"/></svg>
  <svg style="left:406px;top:179px" width="12" height="12" viewBox="0 0 12 12"><path d="M0 0L11 8" stroke="#b3afa3" stroke-width="1"/><path d="M12 4l-3.500 3.500L12 11z" fill="#3a332d"/></svg>
  <svg style="left:406px;top:236px" width="12" height="12" viewBox="0 0 12 12"><path d="M0 0L11 8" stroke="#b3afa3" stroke-width="1"/><path d="M12 4l-3.500 3.500L12 11z" fill="#3a332d"/></svg>
  <svg style="left:406px;top:289px" width="12" height="12" viewBox="0 0 12 12"><path d="M0 0L11 8" stroke="#b3afa3" stroke-width="1"/><path d="M12 4l-3.500 3.500L12 11z" fill="#3a332d"/></svg>
  <svg style="left:406px;top:341px" width="12" height="12" viewBox="0 0 12 12"><path d="M0 0L11 8" stroke="#b3afa3" stroke-width="1"/><path d="M12 4l-3.500 3.500L12 11z" fill="#3a332d"/></svg>
  <svg style="left:406px;top:396px" width="12" height="12" viewBox="0 0 12 12"><path d="M0 0L11 8" stroke="#b3afa3" stroke-width="1"/><path d="M12 4l-3.500 3.500L12 11z" fill="#3a332d"/></svg>
  <!-- tabs text -->
  <div class="tab" style="top:54px">Main</div>
  <div class="tab" style="top:109px">Skills</div>
  <div class="tab" style="top:159px">Abilities</div>
  <div class="tab" style="top:216px">Inventory</div>
  <div class="tab" style="top:267px">Notes</div>
  <div class="tab" style="top:320px">Log</div>
  <div class="tab" style="top:375px;color:#1c1c1c;font-family:'Liberation Sans',sans-serif;font-size:8.300px;font-weight:bold">Actions</div>
  <svg style="left:387.500px;top:17.500px" width="15" height="13" viewBox="0 0 15 13"><path d="M7.800 1C11.400 1 14 2.800 14 5.200S11.400 9.400 7.800 9.400c-.8 0-1.600-.1-2.300-.3L2.200 11.600l.8-3.300C2 7.500 1.500 6.400 1.500 5.200 1.500 2.800 4.200 1 7.800 1z" fill="#f7f6f2" stroke="#4a463e" stroke-width="1"/></svg>
  <!-- close + chat -->
  <div class="xb lserif" style="left:401px;top:4px">X</div>
</div>


<!-- ================= STORY ================= -->
<div id="story" class="abs" style="left:495px;top:220px;width:330px;height:530px">
  <!-- paper -->
  <div style="left:6.500px;top:21px;width:311.500px;height:498px;background:#16110e;clip-path:polygon(0 0,100% 0,100% 97%,96% 100%,2.500% 100%,0 99.300%)"></div>
  <div style="left:7px;top:20px;width:310px;height:497.500px;background:#d8d4cc;box-shadow:inset 0 0 8px #c3bfb4;clip-path:polygon(0 0,100% 0,100% 97%,96% 100%,2.500% 100%,0 99.300%)"></div>
  <svg style="left:7px;top:20px;opacity:.18" width="310" height="485"><rect width="310" height="485" filter="url(#paper)"/></svg>
  <div style="left:4px;top:95px;width:6px;height:1.500px;background:#14100d"></div>
  <div style="left:4px;top:164px;width:6px;height:1.500px;background:#14100d"></div>
  <div style="left:4px;top:304px;width:6px;height:1.500px;background:#14100d"></div>
  <div style="left:4px;top:388px;width:6px;height:1.500px;background:#14100d"></div>
  <div style="left:315px;top:86px;width:6px;height:1.500px;background:#14100d"></div>
  <div style="left:315px;top:125px;width:6px;height:1.500px;background:#14100d"></div>
  <div style="left:315px;top:190px;width:6px;height:1.500px;background:#14100d"></div>
  <div style="left:315px;top:247px;width:6px;height:1.500px;background:#14100d"></div>
  <div style="left:315px;top:352px;width:6px;height:1.500px;background:#14100d"></div>
  <!-- header bar -->
  <div style="left:3px;top:5.500px;width:317px;height:16.500px;background:#9c9587;border:1.500px solid #e2ded2;box-shadow:0 0 0 1px #2a211b"></div>
  <svg style="left:6.500px;top:9px" width="10" height="10" viewBox="0 0 10 10"><circle cx="5" cy="5" r="4.200" fill="#6b6457" stroke="#1c1712" stroke-width="1.300"/><path d="M3.200 5.200a1.800 1.800 0 1 1 1.800 1.700" fill="none" stroke="#1c1712" stroke-width="1"/></svg>
  <div class="xb lserif" style="left:303px;top:7px;width:14.500px;height:14.500px;line-height:14.500px;font-size:11px;background:#b4aea1">X</div>
  <!-- title -->
  <div class="knob" style="left:20px;top:29px"></div>
  <div class="serif nw" style="left:50.500px;top:23.500px;width:238px;overflow:hidden;font-weight:bold;font-size:16.200px;line-height:24px;color:#551313"><span style="letter-spacing:-.5px">04.027</span> Demon, Nalfeshnee - Cerebral</div>
  <!-- body -->
  <div id="sbody" class="serif" style="left:23px;top:46.600px;width:282px;height:444.500px;overflow:hidden;font-size:15.6px;color:#17140f">
    <div class="sl" style="top:4px"><b>Image:</b></div>
    <div class="knob" style="left:6px;top:33px"></div><div class="sl" style="left:24px;top:30px">Demon Nalfeshnee</div>
    <div class="sl" style="top:56px"><b>Item:</b></div>
    <div class="knob" style="left:6px;top:85px"></div><div class="sl" style="left:24px;top:82px">Demon, Nalfeshnee Cerebral Fluid</div>
    <div class="sl" style="top:108px"><b>Spell:</b></div>
    <div class="knob" style="left:6px;top:138px"></div><div class="sl" style="left:24px;top:135px">Demon, Nalfeshnee Cerebral Fluid</div>
    <div class="sl" style="top:161px"><b>Effect:</b> Yes</div>
    <div class="sl" style="top:187px"><b>Potency:</b> Greater</div>
    <div class="sl" style="top:213px"><b>Augmentations:</b> Magic Weapon</div>
    <div class="sl" style="top:239px;letter-spacing:-.22px"><b>Cost:</b> 1,000 gp (5,000 gp for a brain)</div>
    <div class="sl" style="top:265.500px;letter-spacing:-.22px"><b>Price:</b> 2,000 gp (10,000 gp for a brain)</div>
    <div style="left:-2px;top:293.500px;width:281px;height:27.500px;background:#dedbd3;border:1px solid #c9c5ba"></div>
    <div class="sl" style="left:4px;top:296px"><b>Description</b></div>
    <div style="left:0;top:323.400px;width:290px;line-height:18.260px;white-space:nowrap">Nalfashnee’s brain fluids contain a<br>portion of their insane intellect. Spells<br>that enhance mental ability scores<br>(Intelligence, Wisdom, and Charisma)<br>cause all saving throws, ability checks<br>and skills related to the affected<br>ability score to be treated as if the</div>
  </div>
  <!-- scrollbar -->
  <div class="sbar" style="left:303px;top:56px;height:432px;width:3.500px"></div>
  <svg class="scapt" style="left:298px;top:50px;width:14px;height:11px"><use href="#i-scapt"/></svg>
  <svg class="scapb" style="left:298px;top:484px;width:14px;height:11px"><use href="#i-scapb"/></svg>
  <div class="sthumb" style="left:302.300px;top:222px"></div>
  <svg style="left:294.500px;top:29.500px" width="10.500" height="14"><use href="#i-lock"/></svg>
  <!-- nav -->
  <div class="nav" style="left:115px;top:498px">◀</div>
  <div class="nav" style="left:191px;top:498px">▶</div>
</div>


<!-- ================= ITEM ================= -->
<div id="item" class="abs" style="left:877.5px;top:32px;width:270.5px;height:269px;background:#d6d3cb;overflow:hidden;box-shadow:0 1px 2px rgba(0,0,0,.5)">
  <svg style="left:0;top:0;opacity:.18" width="271" height="269"><rect width="271" height="269" filter="url(#paper)"/></svg>
  <div style="left:0;top:0;width:271px;height:49.5px;background:#b5b1aa"></div>
  <div style="left:269.5px;top:0;width:1px;height:269px;background:#ebe9e3"></div>
  <div class="knob" style="left:8.5px;top:7.5px;width:13.5px;height:13.5px"></div>
  <div class="wt" style="left:36px;top:5.800px">Demon, Nalfeshnee Cerebral<br>Fluid</div>
  <svg style="left:240.5px;top:8.5px" width="11" height="14.700"><use href="#i-lock"/></svg>
  <div class="xb lserif" style="left:253px;top:.5px">X</div>
  <div class="il b" style="left:8.5px;top:55.5px">Type</div><div class="il" style="left:85px;top:55.5px">Cerebral Fluid</div>
  <div class="il b" style="left:8.5px;top:77px">Subtype</div><div class="il" style="left:85px;top:77px">Greater</div>
  <div class="il b" style="left:8.5px;top:98.500px">Rarity</div><div class="il" style="left:85px;top:96.500px;line-height:15.900px">Any enhance ability spell used to<br>augment Intelligence, Wisdom or<br>Charisma</div>
  <div style="left:8px;top:150px;width:251px;height:1px;background:#45413a"></div>
  <div class="il b" style="left:8.5px;top:159.500px">Cost</div><div class="il" style="left:85px;top:159.500px">1,000 gp (5,000 gp for a brain)</div>
  <div class="il b" style="left:8.5px;top:180.500px">Weight</div>
  <div class="fbox" style="left:82.500px;top:178.500px;width:37px;height:17.500px;text-align:center;font-size:9.400px;line-height:15px;font-weight:bold;border:1.500px solid #7d7a68;background:#d8d5c9">0.01</div>
  <div style="left:8px;top:201px;width:251px;height:1px;background:#45413a"></div>
  <div class="serif" style="left:13px;top:208.900px;width:245px;height:49px;overflow:hidden;font-size:15.600px;line-height:18.260px;color:#17140f;white-space:nowrap">Nalfashnee’s brain fluids contain<br>a portion of their insane intellect.<br>Spells that enhance mental</div>
  <div class="sbar" style="left:260.500px;top:54px;height:202px"></div>
  <svg class="scapt" style="left:255.500px;top:48px"><use href="#i-scapt"/></svg>
  <svg class="scapb" style="left:255.500px;top:251.500px"><use href="#i-scapb"/></svg>
  <div class="sthumb" style="left:259.500px;top:126px"></div>
  <svg style="left:258px;top:257px" width="12" height="12" viewBox="0 0 13 13"><path d="M2 12L12 2M5 12L12 5M8 12L12 8" stroke="#3a332c" stroke-width="1.100"/></svg>
</div>


<!-- ================= SPELL ================= -->
<div id="spell" class="abs" style="left:879.5px;top:369px;width:271px;height:270px;background:#d6d3cb;overflow:hidden;box-shadow:0 1px 2px rgba(0,0,0,.5)">
  <svg style="left:0;top:0;opacity:.18" width="271" height="270"><rect width="271" height="270" filter="url(#paper)"/></svg>
  <div style="left:0;top:0;width:271px;height:63.500px;background:#b5b1aa"></div>
  <div style="left:270px;top:0;width:1px;height:270px;background:#ebe9e3"></div>
  <div class="knob" style="left:9px;top:7.500px;width:13.500px;height:13.500px"></div>
  <div class="wt" style="left:36.500px;top:5.700px">Demon, Nalfeshnee Cerebral<br>Fluid</div>
  <div class="il b" style="left:36.500px;top:46.500px;font-size:8.800px">Spell</div>
  <svg style="left:240px;top:8.500px" width="11" height="14.700"><use href="#i-lock"/></svg>
  <div class="xb lserif" style="left:253.500px;top:.5px">X</div>
  <div class="serif" style="left:13.300px;top:67.400px;width:245px;height:191.500px;overflow:hidden;font-size:15.600px;line-height:18.260px;color:#17140f;white-space:nowrap">Nalfashnee’s brain fluids contain<br>a portion of their insane intellect.<br>Spells that enhance mental<br>ability scores (Intelligence,<br>Wisdom, and Charisma) cause<br>all saving throws, ability checks<br>and skills related to the affected<br>ability score to be treated as if<br>the target was proficient, gaining<br>their proficiency bonus in all<br>cases. It also allows such spells to</div>
  <div class="sbar" style="left:261px;top:68px;height:189px"></div>
  <svg class="scapt" style="left:256px;top:62px"><use href="#i-scapt"/></svg>
  <svg class="scapb" style="left:256px;top:252px"><use href="#i-scapb"/></svg>
  <div class="sthumb" style="left:260px;top:159px"></div>
  <svg style="left:258.500px;top:258px" width="12" height="12" viewBox="0 0 13 13"><path d="M2 12L12 2M5 12L12 5M8 12L12 8" stroke="#3a332c" stroke-width="1.100"/></svg>
</div>


<!-- ================= BOTTOM BAR ================= -->
<div id="bar" class="abs" style="left:0;top:744px;width:440px;height:53px">
  <div style="left:3.5px;top:18px;width:0;height:33px;border-left:2px dashed #e9e7e0"></div>
  <div style="left:1px;top:4.5px;width:22px;height:13px;background:#f4f3ef;border-radius:3px 7px 7px 3px"></div>
  <div style="left:16px;top:10px;width:44.5px;height:37.5px;background:#8b8578;box-shadow:inset 0 0 0 1.5px #8b8578,inset 0 0 0 3px #d5d0c2"></div>
  <div class="lserif" style="left:16px;top:15px;width:44.5px;text-align:center;color:#f5f3ee;font-size:16px;font-weight:bold;line-height:14px;text-shadow:0 0 2px #5d574b">0</div>
  <div style="left:16px;top:30px;width:44.5px;text-align:center;color:#f5f3ee;font-size:8.6px;font-weight:bold;line-height:12px;text-shadow:0 0 2px #5d574b">Modifier</div>
  <div style="left:20.5px;top:40.5px;width:36px;height:0;border-top:3px dotted #4d473d"></div>
  <svg style="left:11px;top:5px" width="12" height="12" viewBox="0 0 12 12"><circle cx="6" cy="6" r="4.3" fill="#fff" stroke="#0d0d0d" stroke-width="1.7"/><path d="M6 0v3M6 9v3M0 6h3M9 6h3" stroke="#0d0d0d" stroke-width="1.5"/><circle cx="6" cy="6" r="1.4" fill="#0d0d0d"/></svg>
  <div class="mb" style="left:69px;top:7px">ADV</div>
  <div class="mb" style="left:101px;top:7px">+2</div>
  <div class="mb" style="left:132.5px;top:7px">+5</div>
  <div class="mb" style="left:69px;top:28.5px">DIS</div>
  <div class="mb" style="left:101px;top:28.5px">-2</div>
  <div class="mb" style="left:132.5px;top:28.5px">-5</div>
  <!-- dice -->
  <svg style="left:170px;top:0;filter:drop-shadow(.8px 1.600px .8px rgba(0,0,0,.65))" width="250" height="50" viewBox="170 744 250 50" font-family="Liberation Sans, sans-serif" font-weight="bold">
    <g stroke="#1b8790" stroke-width="1.200" stroke-linejoin="round">
      <path d="M194 751.5l10.500 4.500 4 10-4.500 10.500-10 4.500-10-4-4.500-11 4-10z" fill="#4fd6dc"/>
      <path d="M194 755l7.500 12.500h-15.500zM194 755v-3.500M201.500 767.500l6.500-1.500M186 767.500l-6.500-1M186 767.500l7.500 13.500 8-13.500" fill="#5fe3e8" stroke-width=".8"/>
      <path d="M234 753l8.500 2.500 5 7.500v8.500l-5.500 7-8 2-8-2.500-5-7v-8.500l5-7z" fill="#4fd6dc"/>
      <path d="M234 757.500l7.500 5.500-3 9h-9.500l-2.500-9z" fill="#5fe3e8" stroke-width=".8"/>
      <path d="M274 756l13 7 2 7.500-15 10.500-14.500-9.500 1.500-8.500z" fill="#4fd6dc"/>
      <path d="M274 756l5.500 14-5.500 4.500-6-4.500zM279.500 770l9.500.5M268 770l-8.500 1.500M274 774.500v6.500" fill="#5fe3e8" stroke-width=".8"/>
      <path d="M316 752.500l11 16-4.500 8.500-13 2.500-9-8 3-13.500z" fill="#4fd6dc"/>
      <path d="M316 752.500l7 19.500-18 .5zM305 772.500l4.500 7M323 772l-.5 5" fill="#5fe3e8" stroke-width=".8"/>
      <rect x="343" y="755" width="22.500" height="22.500" rx="2.500" transform="rotate(-11 354 766.500)" fill="#55dde2"/>
      <path d="M394.500 750.500l11.500 21.500-27 4z" fill="#3fc0c7"/>
      <path d="M394.500 750.500l-3.500 15.500 15 6M391 766l-12 10" fill="none" stroke-width="1.100"/>
    </g>
    <g fill="#0b2326" font-size="8.500" text-anchor="middle">
      <text x="194" y="766.500" font-size="5">20</text>
      <text x="234" y="769" font-size="6">7</text>
      <text x="274" y="771">1</text>
      <text x="313.500" y="769.500">3</text>
      <text x="354" y="770" font-size="9.500">2</text>
      <text x="393.500" y="768" font-size="5">4</text>
    </g>
  </svg>
</div>

</body>
</html>
